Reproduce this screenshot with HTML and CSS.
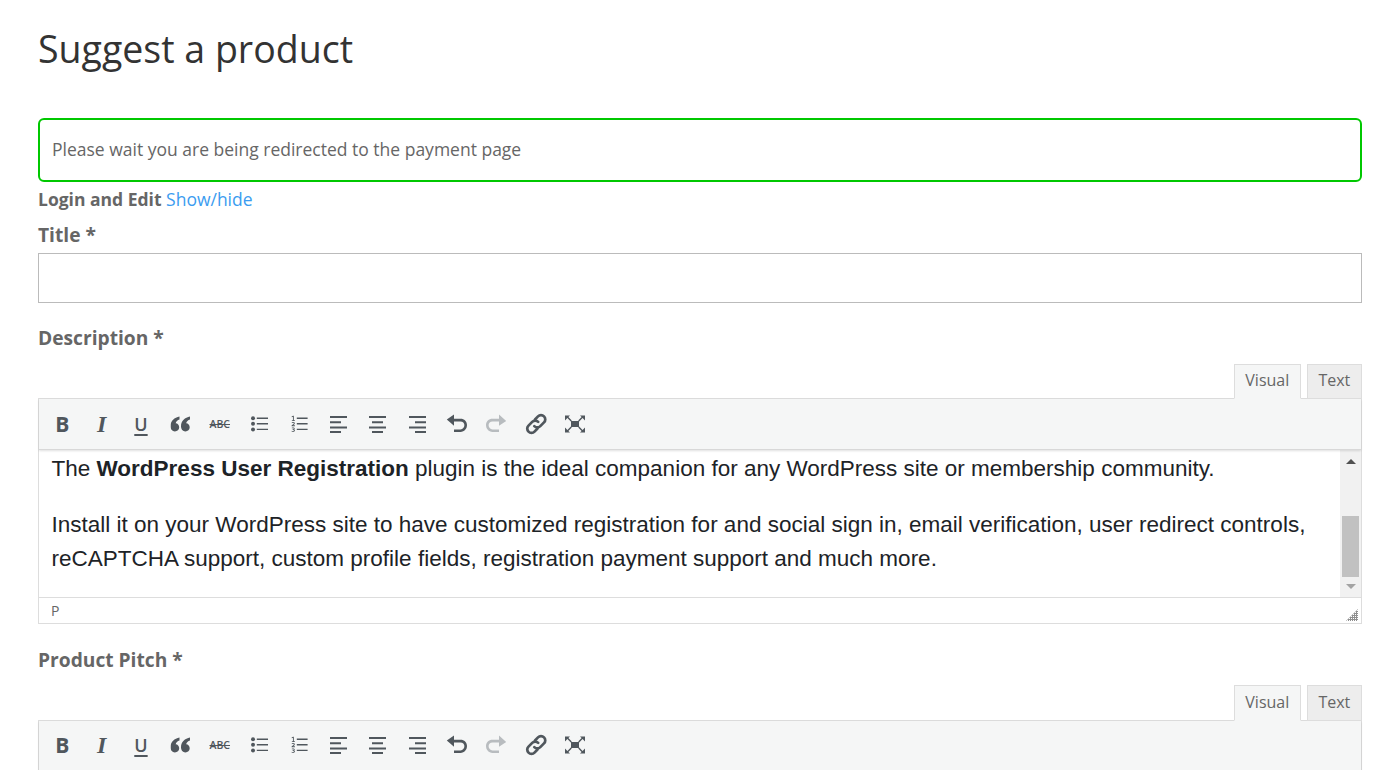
FILE: index.html
```html
<!DOCTYPE html>
<html lang="en">
<head>
<meta charset="utf-8">
<title>Suggest a product</title>
<link rel="stylesheet" href="styles.css">
</head>
<body>
<svg class="defs" width="0" height="0" aria-hidden="true">
  <defs>
    <symbol id="quote" viewBox="0 0 20 16"><path d="M9 .6C4 1.600 0 5 0 10.200 0 13.200 1.900 15.400 4.400 15.400 6.800 15.400 8.700 13.500 8.700 11.200 8.700 8.900 7.100 7.300 5.200 7.200 5.500 5.600 7 4.200 9 3.600ZM19.500 .6C14.500 1.600 10.500 5 10.500 10.200 10.500 13.200 12.400 15.400 14.900 15.400 17.300 15.400 19.200 13.500 19.200 11.200 19.200 8.900 17.600 7.300 15.700 7.200 16 5.600 17.500 4.200 19.500 3.600Z"/></symbol>
    <symbol id="ul" viewBox="0 0 20 20"><circle cx="2.800" cy="3.600" r="2.200"/><circle cx="2.800" cy="9.800" r="2.200"/><circle cx="2.800" cy="16" r="2.200"/><path d="M7 2.800h12.500v1.600H7zM7 9h12.500v1.600H7zM7 15.200h12.500v1.600H7z"/></symbol>
    <symbol id="ol" viewBox="0 0 20 20"><path d="M7 2.800h12v1.600H7zM7 9h12v1.600H7zM7 15.200h12v1.600H7z"/><path d="M1.400 1.400 3 .8h.7v5h1.200v.9H1.500v-.9h1.200V2L1.400 2.400zM1.300 8.200c1-.7 3.500-.7 3.500.9 0 1-1 1.600-2 2.400h2.100v.9H1.200v-.8c1.400-1.200 2.500-1.800 2.500-2.500 0-.7-1.300-.5-2.100 0zM1.400 14.200c1-.5 3.300-.5 3.300 1 0 .5-.3.900-.8 1 .6.100 1 .5 1 1.100 0 1.700-2.500 1.800-3.700 1.100l.2-.8c.9.500 2.400.5 2.400-.3 0-.5-.6-.7-1.500-.7v-.8c.8 0 1.300-.2 1.300-.6 0-.7-1.300-.6-2-.2z"/></symbol>
    <symbol id="al" viewBox="0 0 18 18"><path d="M.5 1h17v2H.5zM.5 6.300h11v2H.5zM.5 11.600h17v2H.5zM.5 16h11v2H.5z"/></symbol>
    <symbol id="ac" viewBox="0 0 18 18"><path d="M.5 1h17v2H.5zM3.500 6.300h11v2h-11zM.5 11.600h17v2H.5zM3.500 16h11v2h-11z"/></symbol>
    <symbol id="ar" viewBox="0 0 18 18"><path d="M.5 1h17v2H.5zM6.500 6.300h11v2h-11zM.5 11.600h17v2H.5zM6.500 16h11v2h-11z"/></symbol>
    <symbol id="undo" viewBox="0 0 22 20"><path d="M8 .5v4.300h6.500c3.800 0 6.500 2.600 6.500 6.300s-2.700 6.900-6.500 6.900H8v-2.600h6.500c2.300 0 3.900-1.800 3.900-4.300 0-2.300-1.600-3.700-3.900-3.700H8v4.400L.8 5.600z"/></symbol>
    <symbol id="redo" viewBox="0 0 22 20"><path d="M14 .5v4.300H7.500C3.700 4.800 1 7.400 1 11.100s2.700 6.900 6.500 6.900H14v-2.600H7.500c-2.300 0-3.900-1.800-3.900-4.300 0-2.300 1.600-3.700 3.900-3.700H14v4.400l7.200-4.900z"/></symbol>
    <symbol id="link" viewBox="0 0 22 22"><g fill="none" stroke-width="2.700" stroke="#50575d" stroke-linecap="round"><path d="M10 6.500 13 3.400a4.200 4.200 0 0 1 6 0 4.200 4.200 0 0 1 0 6l-3.700 3.700a4.200 4.200 0 0 1-6 0"/><path d="M12.500 15.500 9.500 18.600a4.200 4.200 0 0 1-6 0 4.200 4.200 0 0 1 0-6l3.700-3.700a4.200 4.200 0 0 1 6 0"/></g></symbol>
    <symbol id="full" viewBox="0 0 20 18"><path d="M6 6h8v6H6z"/><path d="M0 .5h5L3.400 2.100 6.800 5.500 5.800 6.500 2.400 3.100 0 5.500zM20 .5h-5l1.600 1.600-3.400 3.400 1 1 3.400-3.400 2.400 2.400zM0 17.500h5l-1.600-1.600 3.400-3.400-1-1-3.400 3.400L0 12.500zM20 17.500h-5l1.600-1.600-3.400-3.400 1-1 3.400 3.400 2.400-2.400z"/></symbol>
  </defs>
</svg>
<main class="page">
  <h1 class="heading">Suggest a product</h1>
  <div class="notice">Please wait you are being redirected to the payment page</div>
  <p class="login"><strong>Login and Edit</strong> <a href="#" class="toggle">Show/hide</a></p>
  <label class="label label-title">Title *</label>
  <input class="field" type="text">
  <label class="label label-desc">Description *</label>
  <section class="editor">
    <div class="tabs"><span class="tab tab-active">Visual</span><span class="tab">Text</span></div>
    <div class="frame">
      <div class="toolbar">
        <span class="btn txt bold">B</span>
        <span class="btn txt ital">I</span>
        <span class="btn txt under">U</span>
        <span class="btn"><svg class="ic ic-quote"><use href="#quote"/></svg></span>
        <span class="btn txt strike">ABC</span>
        <span class="btn"><svg class="ic ic-list"><use href="#ul"/></svg></span>
        <span class="btn"><svg class="ic ic-list"><use href="#ol"/></svg></span>
        <span class="btn"><svg class="ic"><use href="#al"/></svg></span>
        <span class="btn"><svg class="ic"><use href="#ac"/></svg></span>
        <span class="btn"><svg class="ic"><use href="#ar"/></svg></span>
        <span class="btn"><svg class="ic ic-wide"><use href="#undo"/></svg></span>
        <span class="btn off"><svg class="ic ic-wide"><use href="#redo"/></svg></span>
        <span class="btn"><svg class="ic ic-wide"><use href="#link"/></svg></span>
        <span class="btn"><svg class="ic ic-full"><use href="#full"/></svg></span>
      </div>
      <div class="content">
        <div class="doc">
          <p class="para">The <strong>WordPress User Registration</strong> plugin is the ideal companion for any WordPress site or membership community.</p>
          <p class="para">Install it on your WordPress site to have customized registration for and social sign in, email verification, user redirect controls, reCAPTCHA support, custom profile fields, registration payment support and much more.</p>
        </div>
        <div class="scrollbar">
          <span class="arrow arrow-up"></span>
          <span class="thumb"></span>
          <span class="arrow arrow-down"></span>
        </div>
      </div>
      <div class="status"><span>P</span><span class="grip"></span></div>
    </div>
  </section>
  <label class="label label-pitch">Product Pitch *</label>
  <section class="editor editor-next">
    <div class="tabs"><span class="tab tab-active">Visual</span><span class="tab">Text</span></div>
    <div class="frame">
      <div class="toolbar">
        <span class="btn txt bold">B</span>
        <span class="btn txt ital">I</span>
        <span class="btn txt under">U</span>
        <span class="btn"><svg class="ic ic-quote"><use href="#quote"/></svg></span>
        <span class="btn txt strike">ABC</span>
        <span class="btn"><svg class="ic ic-list"><use href="#ul"/></svg></span>
        <span class="btn"><svg class="ic ic-list"><use href="#ol"/></svg></span>
        <span class="btn"><svg class="ic"><use href="#al"/></svg></span>
        <span class="btn"><svg class="ic"><use href="#ac"/></svg></span>
        <span class="btn"><svg class="ic"><use href="#ar"/></svg></span>
        <span class="btn"><svg class="ic ic-wide"><use href="#undo"/></svg></span>
        <span class="btn off"><svg class="ic ic-wide"><use href="#redo"/></svg></span>
        <span class="btn"><svg class="ic ic-wide"><use href="#link"/></svg></span>
        <span class="btn"><svg class="ic ic-full"><use href="#full"/></svg></span>
      </div>
    </div>
  </section>
</main>
</body>
</html>
```
FILE: styles.css
```css
* { box-sizing: border-box; }
html, body { margin: 0; height: 770px; overflow: hidden; background: #fff; }
body { font-family: "Open Sans", sans-serif; color: #666; font-size: 17.5px; }
.defs { display: block; height: 0; }
.page { padding: 0 38px; display: flex; flex-direction: column; }
.heading { margin: 24px 0 0; height: 94px; font-size: 37.5px; line-height: 50px; font-weight: 400; color: #333; }
.notice { height: 64px; border: 2px solid #00c800; border-radius: 6px; padding: 0 12px 2px; display: flex; align-items: center; font-size: 17.5px; color: #666; }
.login { margin: 5px 0 0; height: 24px; line-height: 24px; }
.login strong { font-weight: 700; color: #666; }
.toggle { color: #3b9cf0; text-decoration: none; }
.label { display: block; font-weight: 700; font-size: 19.2px; line-height: 24px; color: #666; }
.label-title { margin-top: 12px; height: 24px; }
.field { display: block; width: 100%; height: 50px; margin-top: 6px; border: 1px solid #bbb; background: #fff; }
.label-desc { margin-top: 23px; }
.label-pitch { margin-top: 24px; margin-bottom: -1px; }
.tabs { display: flex; justify-content: flex-end; gap: 6px; height: 35px; margin-top: 14px; margin-bottom: -1px; position: relative; z-index: 1; }
.tab { height: 35px; padding: 0 10.7px; border: 1px solid #ddd; background: #ededed; font-size: 16px; line-height: 31px; color: #666; }
.tab-active { background: #f5f6f6; border-bottom-color: #f5f6f6; padding: 0 10.5px; }
.editor-next .tabs { height: 36px; }
.editor-next .tab { height: 36px; line-height: 33px; }
.editor-next .toolbar { padding-bottom: 2px; }
.frame { border: 1px solid #ddd; }
.toolbar { height: 51px; background: #f5f6f6; display: flex; align-items: center; padding-left: 3.5px; border-bottom: 1px solid #d8d8d8; box-shadow: 0 1px 2px rgba(0,0,0,.12); position: relative; }
.btn { width: 39.4px; height: 30px; flex: none; display: flex; align-items: center; justify-content: center; color: #50575d; fill: #50575d; }
.off { color: #b8bcbf; fill: #b8bcbf; }
.txt { font-size: 21px; }
.bold { font-weight: 700; }
.ital { font-family: "Liberation Serif", serif; font-style: italic; font-weight: 700; font-size: 24px; }
.under { font-size: 18px; font-weight: 600; line-height: 24px; text-decoration: underline; text-decoration-thickness: 2px; text-underline-offset: 3px; }
.strike { font-size: 10.5px; font-weight: 600; text-decoration: line-through; }
.ic { width: 18px; height: 18px; display: block; transform: translateX(0.5px); }
.ic-list { width: 18px; height: 18px; }
.ic-wide { width: 22px; height: 22px; transform: translateX(1px); }
.ic-full { width: 20px; height: 18px; transform: translateX(1px); }
.ic-quote { width: 20px; height: 16px; transform: translateX(0.5px); }
.content { display: flex; height: 147px; overflow: hidden; background: #fff; }
.doc { flex: 1; min-width: 0; padding: 2px 20px 0 12.5px; font-family: "Liberation Sans", sans-serif; font-size: 22.5px; line-height: 34px; color: #1d2327; }
.para { margin: 0 0 22px; }
.scrollbar { width: 21px; flex: none; background: #f1f1f1; display: flex; flex-direction: column; align-items: center; }
.arrow { width: 0; height: 0; border-left: 5px solid transparent; border-right: 5px solid transparent; }
.arrow-up { border-bottom: 5px solid #505050; margin-top: 9px; }
.arrow-down { border-top: 5px solid #a3a3a3; margin-top: 7px; }
.thumb { width: 17px; height: 61px; background: #c1c1c1; margin-top: 52px; }
.status { height: 26px; border-top: 1px solid #ddd; display: flex; align-items: center; justify-content: space-between; padding: 0 3px 0 12px; font-size: 14px; color: #666; }
.grip { width: 12px; height: 12px; background-image: linear-gradient(#8f8f8f 1px, transparent 1px), linear-gradient(90deg, #8f8f8f 1px, transparent 1px); background-size: 2px 2px; clip-path: polygon(100% 0, 100% 100%, 0 100%); align-self: flex-end; margin-bottom: 2px; }
```
